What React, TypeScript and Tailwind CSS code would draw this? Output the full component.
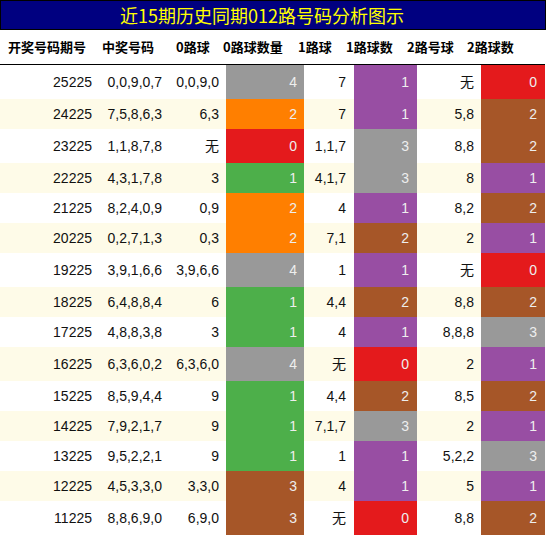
const C = {
  gray: "bg-[#999999]",
  orange: "bg-[#ff7f00]",
  red: "bg-[#e41a1c]",
  green: "bg-[#4daf4a]",
  purple: "bg-[#984ea3]",
  brown: "bg-[#a65628]",
};

type Row = [string, string, string, string, keyof typeof C, string, string, keyof typeof C, string, string, keyof typeof C];

// 期号, 中奖号码, 0路球, 0路数量, 颜色, 1路球, 1路数, 颜色, 2路球, 2路数, 颜色
const rows: Row[] = [
  ["25225", "0,0,9,0,7", "0,0,9,0", "4", "gray", "7", "1", "purple", "无", "0", "red"],
  ["24225", "7,5,8,6,3", "6,3", "2", "orange", "7", "1", "purple", "5,8", "2", "brown"],
  ["23225", "1,1,8,7,8", "无", "0", "red", "1,1,7", "3", "gray", "8,8", "2", "brown"],
  ["22225", "4,3,1,7,8", "3", "1", "green", "4,1,7", "3", "gray", "8", "1", "purple"],
  ["21225", "8,2,4,0,9", "0,9", "2", "orange", "4", "1", "purple", "8,2", "2", "brown"],
  ["20225", "0,2,7,1,3", "0,3", "2", "orange", "7,1", "2", "brown", "2", "1", "purple"],
  ["19225", "3,9,1,6,6", "3,9,6,6", "4", "gray", "1", "1", "purple", "无", "0", "red"],
  ["18225", "6,4,8,8,4", "6", "1", "green", "4,4", "2", "brown", "8,8", "2", "brown"],
  ["17225", "4,8,8,3,8", "3", "1", "green", "4", "1", "purple", "8,8,8", "3", "gray"],
  ["16225", "6,3,6,0,2", "6,3,6,0", "4", "gray", "无", "0", "red", "2", "1", "purple"],
  ["15225", "8,5,9,4,4", "9", "1", "green", "4,4", "2", "brown", "8,5", "2", "brown"],
  ["14225", "7,9,2,1,7", "9", "1", "green", "7,1,7", "3", "gray", "2", "1", "purple"],
  ["13225", "9,5,2,2,1", "9", "1", "green", "1", "1", "purple", "5,2,2", "3", "gray"],
  ["12225", "4,5,3,3,0", "3,3,0", "3", "brown", "4", "1", "purple", "5", "1", "purple"],
  ["11225", "8,8,6,9,0", "6,9,0", "3", "brown", "无", "0", "red", "8,8", "2", "brown"],
];

const font = { fontFamily: '"Liberation Sans", "Noto Sans CJK SC", sans-serif' };
const cjk = { fontFamily: '"Noto Sans CJK SC", "Liberation Sans", sans-serif' };

export default function App() {
  return (
    <div className="w-[546px] h-[536px] bg-white" style={font}>
      {/* title */}
      <div
        className="h-[30px] bg-[#000080] border border-black flex items-center justify-center pr-[22px] text-[18px] text-[#ffff00] leading-none"
        style={cjk}
      >
        近15期历史同期012路号码分析图示
      </div>

      {/* header */}
      <div
        className="h-[35px] w-[545px] border-b border-black flex items-center pl-[8px] text-[13px] font-bold text-black whitespace-nowrap"
        style={cjk}
      >
        <div className="w-[94px]">开奖号码期号</div>
        <div className="w-[74px]">中奖号码</div>
        <div className="w-[47px]">0路球</div>
        <div className="w-[75px]">0路球数量</div>
        <div className="w-[48px]">1路球</div>
        <div className="w-[61px]">1路球数</div>
        <div className="w-[60px]">2路号球</div>
        <div>2路球数</div>
      </div>

      {/* rows */}
      <div className="w-[545px] text-[14px] text-[#111]">
        {rows.map((r, i) => {
          const tall = r.includes("无");
          return (
            <div
              key={r[0]}
              className={`flex ${tall ? "h-[34px]" : "h-[30px]"} ${i % 2 === 1 ? "bg-[#fefbe8]" : "bg-white"}`}
            >
              <div className="w-[100px] flex items-center justify-end pr-[8px]">{r[0]}</div>
              <div className="w-[70px] flex items-center justify-end pr-[8px]">{r[1]}</div>
              <div className="w-[56px] flex items-center justify-end pr-[7px]">{r[2]}</div>
              <div className={`w-[78px] flex items-center justify-end pr-[7px] text-[#eeeeee] ${C[r[4]]}`}>{r[3]}</div>
              <div className="w-[50px] flex items-center justify-end pr-[8px]">{r[5]}</div>
              <div className={`w-[63px] flex items-center justify-end pr-[8px] text-[#eeeeee] ${C[r[7]]}`}>{r[6]}</div>
              <div className="w-[64px] flex items-center justify-end pr-[7px]">{r[8]}</div>
              <div className={`w-[64px] flex items-center justify-end pr-[8px] text-[#eeeeee] ${C[r[10]]}`}>{r[9]}</div>
            </div>
          );
        })}
      </div>
    </div>
  );
}
